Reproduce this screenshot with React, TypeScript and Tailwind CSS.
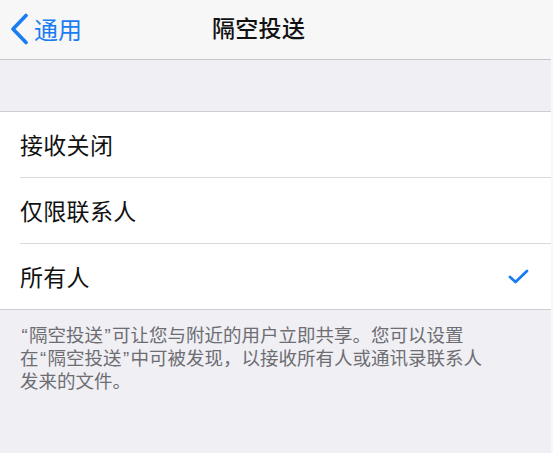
import React from "react";

function Chevron() {
  return (
    <svg width="20" height="32" viewBox="0 0 20 32" className="block">
      <polyline
        points="17,2.5 4,16 17,29.5"
        fill="none"
        stroke="#1a7cf2"
        strokeWidth="3.6"
        strokeLinecap="round"
        strokeLinejoin="round"
      />
    </svg>
  );
}

function Check() {
  return (
    <svg width="22" height="16" viewBox="0 0 22 16" className="block">
      <polyline
        points="2,8 7.5,13 19,2"
        fill="none"
        stroke="#1a7cf2"
        strokeWidth="2.8"
        strokeLinecap="round"
        strokeLinejoin="round"
      />
    </svg>
  );
}

function Row({ label, checked, last }: { label: string; checked?: boolean; last?: boolean }) {
  return (
    <div className="pl-[20px]">
      <div
        className={
          "flex items-center justify-between pr-[21px] " +
          (last ? "h-[65px]" : "h-[66px] border-b border-[#dadade]")
        }
      >
        <span className="text-[23px] leading-none text-[#111] tracking-[0.3px]">{label}</span>
        {checked ? <Check /> : null}
      </div>
    </div>
  );
}

function Q({ c }: { c: string }) {
  return (
    <span className="font-['Liberation_Sans',sans-serif] leading-none inline-block w-[9px] text-center">
      {c}
    </span>
  );
}

export default function App() {
  return (
    <div className="w-[553px] h-[453px] overflow-hidden flex bg-[#f8f8fa] font-['Noto_Sans_CJK_SC',sans-serif]">
      <div className="w-[551px] h-full flex flex-col bg-[#efeff4]">
        <div className="h-[60px] shrink-0 bg-[#f7f7f8] border-b border-[#c6c6ca] flex items-center">
          <div className="flex items-center pl-[9px] mt-[-2px]">
            <Chevron />
            <span className="ml-[5px] text-[24px] leading-none text-[#1a7cf2]">通用</span>
          </div>
          <div className="ml-[130px] text-[23px] leading-none font-medium text-[#111] mt-[-4px] tracking-[0.3px]">
            隔空投送
          </div>
        </div>
        <div className="h-[51px] shrink-0" />
        <div className="bg-white border-y border-[#cfcfd3] shrink-0">
          <Row label="接收关闭" />
          <Row label="仅限联系人" />
          <Row label="所有人" checked last />
        </div>
        <div className="pl-[20px] pt-[13px] text-[18.5px] text-[#6d6d72] flex flex-col">
          <div className="leading-[23px] h-[23px] whitespace-nowrap">
            <Q c="“" />隔空投送<Q c="”" />可让您与附近的用户立即共享。您可以设置
          </div>
          <div className="leading-[23px] h-[23px] whitespace-nowrap">
            在<Q c="“" />隔空投送<Q c="”" />中可被发现，以接收所有人或通讯录联系人
          </div>
          <div className="leading-[23px] h-[23px] whitespace-nowrap">发来的文件。</div>
        </div>
      </div>
    </div>
  );
}
